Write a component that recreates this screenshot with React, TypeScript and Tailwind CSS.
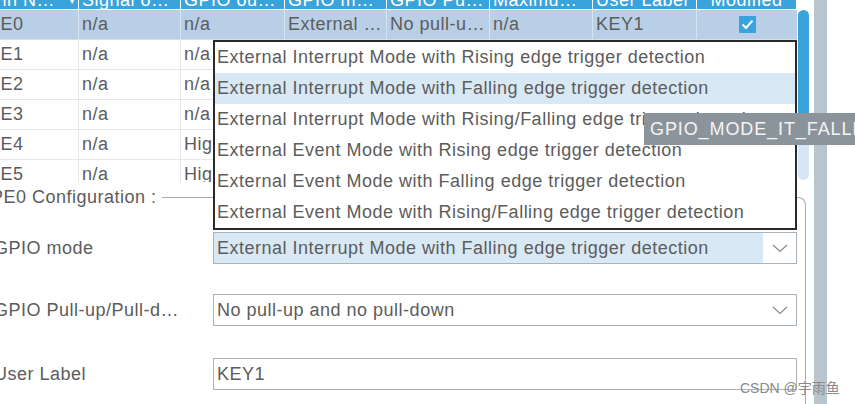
import React from 'react';

// column widths, first column is pushed off the left edge a little
const headers = [
  'Pin Name',
  'Signal on Pin',
  'GPIO output level',
  'GPIO mode',
  'GPIO Pull-up/Pull-down',
  'Maximum output speed',
  'User Label',
  'Modified',
];

type Row = { cells: string[]; modified: boolean };

const rows: Row[] = [
  { cells: ['PE0', 'n/a', 'n/a', 'External Interrupt Mode with Falling edge trigger detection', 'No pull-up and no pull-down', 'n/a', 'KEY1'], modified: true },
  { cells: ['PE1', 'n/a', 'n/a', 'External Interrupt Mode', 'No pull-up', 'n/a', ''], modified: false },
  { cells: ['PE2', 'n/a', 'n/a', 'External Interrupt Mode', 'No pull-up', 'n/a', ''], modified: false },
  { cells: ['PE3', 'n/a', 'n/a', 'External Interrupt Mode', 'No pull-up', 'n/a', ''], modified: false },
  { cells: ['PE4', 'n/a', 'High', 'Output Push Pull', 'No pull-up', 'Low', ''], modified: false },
  { cells: ['PE5', 'n/a', 'High', 'Output Push Pull', 'No pull-up', 'Low', ''], modified: false },
];

const modes = [
  'External Interrupt Mode with Rising edge trigger detection',
  'External Interrupt Mode with Falling edge trigger detection',
  'External Interrupt Mode with Rising/Falling edge trigger detection',
  'External Event Mode with Rising edge trigger detection',
  'External Event Mode with Falling edge trigger detection',
  'External Event Mode with Rising/Falling edge trigger detection',
];

const gridCols = 'grid grid-cols-[92px_102px_104px_102px_103px_103px_104px_100px]';

const Chevron = () => (
  <svg width="16" height="9" viewBox="0 0 16 9" fill="none">
    <polyline points="1,1 8,7.5 15,1" stroke="#8a8a8a" strokeWidth="1.2" />
  </svg>
);

const Check = () => (
  <span className="flex h-[17px] w-[17px] items-center justify-center bg-[#3aa3dc]">
    <svg width="13" height="11" viewBox="0 0 13 11" fill="none">
      <polyline points="1.5,5.5 5,9 11.5,1.5" stroke="white" strokeWidth="2" />
    </svg>
  </span>
);

const FormRow = ({ label, children, className }: { label: string; children: React.ReactNode; className: string }) => (
  <div className={`grid grid-cols-[226px_584px] items-center ${className}`}>
    <div className="pl-[7px]">{label}</div>
    {children}
  </div>
);

export default function App() {
  return (
    <div
      className="relative h-[404px] w-[855px] overflow-hidden bg-white text-[18px] tracking-[0.5px] text-[#5c5c5c]"
      style={{ fontFamily: '"Liberation Sans", Arial, sans-serif' }}
    >
      <div className="flex h-full">
        {/* left panel, starts 13px off screen */}
        <div className="-ml-[13px] flex w-[823px] shrink-0 flex-col">
          <div className="flex h-[182px] overflow-hidden">
            <div className="w-[810px] shrink-0">
              {/* header, only the bottom of the labels is visible */}
              <div className={`${gridCols} h-[9px] overflow-hidden bg-[#3aa3dc] text-white`}>
                {headers.map((h, i) => (
                  <div key={h} className={`border-r border-white px-[3px] ${i === 7 ? 'text-center' : ''}`}>
                    <div className={`-mt-[15px] flex h-[30px] items-center leading-[30px] ${i === 7 ? 'justify-center' : ''}`}>
                      <span className="truncate">{h}</span>
                      {i === 0 && <span className="ml-[6px] text-[12px]">▾</span>}
                    </div>
                  </div>
                ))}
              </div>
              <div className="h-px bg-white" />
              {rows.map((r, ri) => (
                <div
                  key={ri}
                  className={`${gridCols} h-[30px] border-b ${ri === 0 ? 'border-[#d4e1ee] bg-[#b9cfe6]' : 'border-[#e4e7eb] bg-white'}`}
                >
                  {r.cells.map((c, ci) => (
                    <div
                      key={ci}
                      className={`truncate border-r leading-[29px] ${ci === 0 ? 'pl-[1px]' : 'px-[3px]'} ${ri === 0 ? 'border-[#d6e3f0]' : 'border-[#e4e7eb]'}`}
                    >
                      {c}
                    </div>
                  ))}
                  <div className="flex items-center justify-center">{r.modified && <Check />}</div>
                </div>
              ))}
            </div>
            {/* table scrollbar */}
            <div className="w-[13px] shrink-0 pl-[1px] pt-[10px]">
              <div className="h-[170px] w-[11px] rounded-full bg-[#d7e6f4]">
                <div className="h-[118px] w-[11px] rounded-full bg-[#3aa3dc]" />
              </div>
            </div>
          </div>

          {/* configuration group */}
          <div className="mt-[15px] w-[819px] flex-1 rounded-tr-[8px] border-r border-t border-[#a3adb5]">
            <div className="-mt-[12px] h-[22px] leading-[22px]">
              <span className="bg-white pl-[4px] pr-[5px]">PE0 Configuration :</span>
            </div>
            <FormRow label="GPIO mode" className="mt-[24px]">
              <div className="flex h-[32px] items-center border border-[#aab2ba] bg-[#d9e8f5]">
                <span className="flex-1 truncate pl-[3px]">{modes[1]}</span>
                <span className="flex h-full w-[33px] items-center justify-center bg-white">
                  <Chevron />
                </span>
              </div>
            </FormRow>
            <FormRow label="GPIO Pull-up/Pull-d…" className="mt-[30px]">
              <div className="flex h-[32px] items-center border border-[#aab2ba] bg-white">
                <span className="flex-1 truncate pl-[3px]">No pull-up and no pull-down</span>
                <span className="flex h-full w-[33px] items-center justify-center">
                  <Chevron />
                </span>
              </div>
            </FormRow>
            <FormRow label="User Label" className="mt-[32px]">
              <div className="flex h-[32px] items-center border border-[#aab2ba] bg-white pl-[3px]">KEY1</div>
            </FormRow>
          </div>
        </div>

        <div className="ml-[4px] h-full w-[13px] shrink-0 bg-[#b9c5cc]" />
        <div className="flex-1 bg-white" />
      </div>

      {/* opened GPIO mode list */}
      <div className="absolute left-[213px] top-[40px] w-[584px] border-2 border-[#2a2a2a] bg-white">
        {modes.map((m, i) => (
          <div key={m} className={`h-[31px] truncate pl-[2px] leading-[31px] ${i === 1 ? 'bg-[#d9e8f5]' : ''}`}>
            {m}
          </div>
        ))}
      </div>

      {/* tooltip */}
      <div className="absolute left-[644px] top-[113px] h-[32px] w-[240px] whitespace-nowrap bg-[#8b949a] pl-[6px] leading-[32px] tracking-[0.9px] text-[#f4f4f4]">
        GPIO_MODE_IT_FALLING
      </div>

      {/* watermark */}
      <div
        className="absolute left-[740px] top-[378px] text-[14px] tracking-normal text-[#8a8a8a]"
        style={{ fontFamily: '"Liberation Sans", "Noto Sans CJK SC", sans-serif' }}
      >
        CSDN @宇雨鱼
      </div>
    </div>
  );
}
